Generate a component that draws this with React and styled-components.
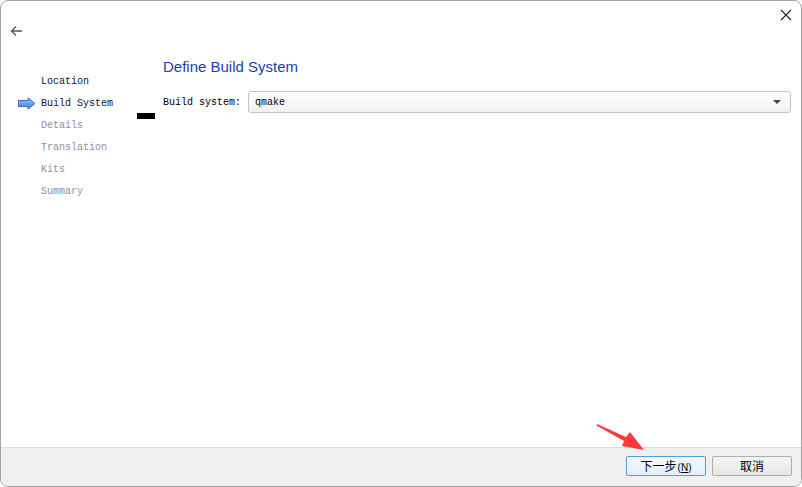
import styled, { createGlobalStyle } from 'styled-components';

const GlobalStyle = createGlobalStyle`
    html, body {
        margin: 0;
        padding: 0;
        background: #ffffff;
    }
    * {
        box-sizing: border-box;
    }
`;

const Window = styled.div`
    position: relative;
    width: 802px;
    height: 487px;
    border: 1px solid #a3a3a3;
    border-radius: 8px;
    background: #ffffff;
    display: flex;
    flex-direction: column;
    overflow: hidden;
    font-family: 'Liberation Mono', monospace;
`;

const TopBar = styled.div`
    height: 50px;
    display: flex;
    justify-content: space-between;
    align-items: flex-start;
    padding: 0 8px 0 8px;
`;

const IconButton = styled.div`
    width: 14px;
    height: 14px;
    margin-top: ${(p) => p.$top}px;
    display: flex;
    align-items: center;
    justify-content: center;
`;

const Body = styled.div`
    flex: 1;
    display: flex;
`;

const Sidebar = styled.ul`
    width: 136px;
    margin: 0;
    padding: 19px 0 0 17px;
    list-style: none;
`;

const Step = styled.li`
    height: 22px;
    display: flex;
    align-items: center;
    font-size: 10px;
    color: ${(p) => (p.$done ? '#10103a' : '#8d8fa3')};
`;

const StepIcon = styled.span`
    width: 23px;
    display: flex;
    align-items: center;
`;

const Gutter = styled.div`
    width: 26px;
    padding-top: 62px;
`;

const Mark = styled.div`
    width: 18px;
    height: 6px;
    background: #000000;
`;

const Main = styled.div`
    flex: 1;
    padding: 6px 10px 0 0;
    display: flex;
    flex-direction: column;
`;

const PageTitle = styled.h2`
    margin: 0;
    height: 20px;
    line-height: 20px;
    font-family: 'Liberation Sans', Arial, sans-serif;
    font-weight: normal;
    font-size: 15px;
    color: #1a3fb0;
`;

const FormRow = styled.div`
    margin-top: 14px;
    display: flex;
    align-items: center;
`;

const Label = styled.label`
    width: 85px;
    font-size: 10px;
    color: #000000;
`;

const Combo = styled.div`
    flex: 1;
    height: 22px;
    border: 1px solid #c4c4c4;
    border-radius: 3px;
    background: linear-gradient(#ffffff, #f1f1f1);
    display: flex;
    align-items: center;
    justify-content: space-between;
    padding: 0 9px 0 6px;
    font-size: 10px;
    color: #000000;
`;

const Caret = styled.span`
    width: 0;
    height: 0;
    border-left: 4px solid transparent;
    border-right: 4px solid transparent;
    border-top: 4px solid #444444;
`;

const Footer = styled.div`
    height: 39px;
    border-top: 1px solid #dcdcdc;
    background: #f0f0f0;
    display: flex;
    justify-content: flex-end;
    align-items: flex-start;
    gap: 6px;
    padding: 8px 9px 0 0;
`;

const Button = styled.button`
    width: 80px;
    height: 20px;
    padding: 0;
    border: 1px solid ${(p) => (p.$primary ? '#4d9fe3' : '#adadad')};
    border-radius: 2px;
    background: ${(p) =>
        p.$primary
            ? 'linear-gradient(#f4f8fc, #e5eef7)'
            : 'linear-gradient(#f5f5f5, #e6e6e6)'};
    font-family: 'Noto Sans CJK SC', 'Liberation Sans', sans-serif;
    font-size: 12px;
    line-height: 18px;
    color: #000000;
`;

const Mnemonic = styled.span`
    font-family: 'Liberation Sans', sans-serif;
    font-size: 10px;
    margin-left: 1px;

    u {
        text-decoration: underline;
    }
`;

const Annotation = styled.svg`
    position: absolute;
    left: 589px;
    top: 417px;
`;

const steps = [
    { name: 'Location', done: true },
    { name: 'Build System', done: true, current: true },
    { name: 'Details' },
    { name: 'Translation' },
    { name: 'Kits' },
    { name: 'Summary' },
];

function StepArrow() {
    return (
        <svg width="18" height="13" viewBox="0 0 18 13">
            <defs>
                <linearGradient id="arr" x1="0" y1="0" x2="0" y2="1">
                    <stop offset="0" stopColor="#9cc7f5" />
                    <stop offset="1" stopColor="#3a7fdc" />
                </linearGradient>
            </defs>
            <path
                d="M0.5 3.5 H10 V0.8 L17 6.5 L10 12.2 V9.5 H0.5 Z"
                fill="url(#arr)"
                stroke="#3c6fb8"
                strokeWidth="1"
                strokeLinejoin="round"
            />
        </svg>
    );
}

export default function App() {
    return (
        <>
            <GlobalStyle />
            <Window>
                <TopBar>
                    <IconButton $top={23}>
                        <svg width="13" height="12" viewBox="0 0 13 12">
                            <path
                                d="M12 6 H1.5 M6 1.5 L1.5 6 L6 10.5"
                                fill="none"
                                stroke="#555555"
                                strokeWidth="1.3"
                            />
                        </svg>
                    </IconButton>
                    <IconButton $top={7}>
                        <svg width="12" height="12" viewBox="0 0 12 12">
                            <path
                                d="M1 1 L11 11 M11 1 L1 11"
                                fill="none"
                                stroke="#222222"
                                strokeWidth="1.1"
                            />
                        </svg>
                    </IconButton>
                </TopBar>
                <Body>
                    <Sidebar>
                        {steps.map((s) => (
                            <Step key={s.name} $done={s.done}>
                                <StepIcon>{s.current && <StepArrow />}</StepIcon>
                                {s.name}
                            </Step>
                        ))}
                    </Sidebar>
                    <Gutter>
                        <Mark />
                    </Gutter>
                    <Main>
                        <PageTitle>Define Build System</PageTitle>
                        <FormRow>
                            <Label>Build system:</Label>
                            <Combo>
                                qmake
                                <Caret />
                            </Combo>
                        </FormRow>
                    </Main>
                </Body>
                <Footer>
                    <Button $primary>
                        下一步
                        <Mnemonic>
                            (<u>N</u>)
                        </Mnemonic>
                    </Button>
                    <Button>取消</Button>
                </Footer>
                <Annotation width="60" height="36" viewBox="0 0 60 36">
                    <path
                        d="M7 6 L36 19 L40 14 L54 32 L32 28 L34 23 L6.5 7.5 Z"
                        fill="#ff3a3a"
                    />
                </Annotation>
            </Window>
        </>
    );
}
